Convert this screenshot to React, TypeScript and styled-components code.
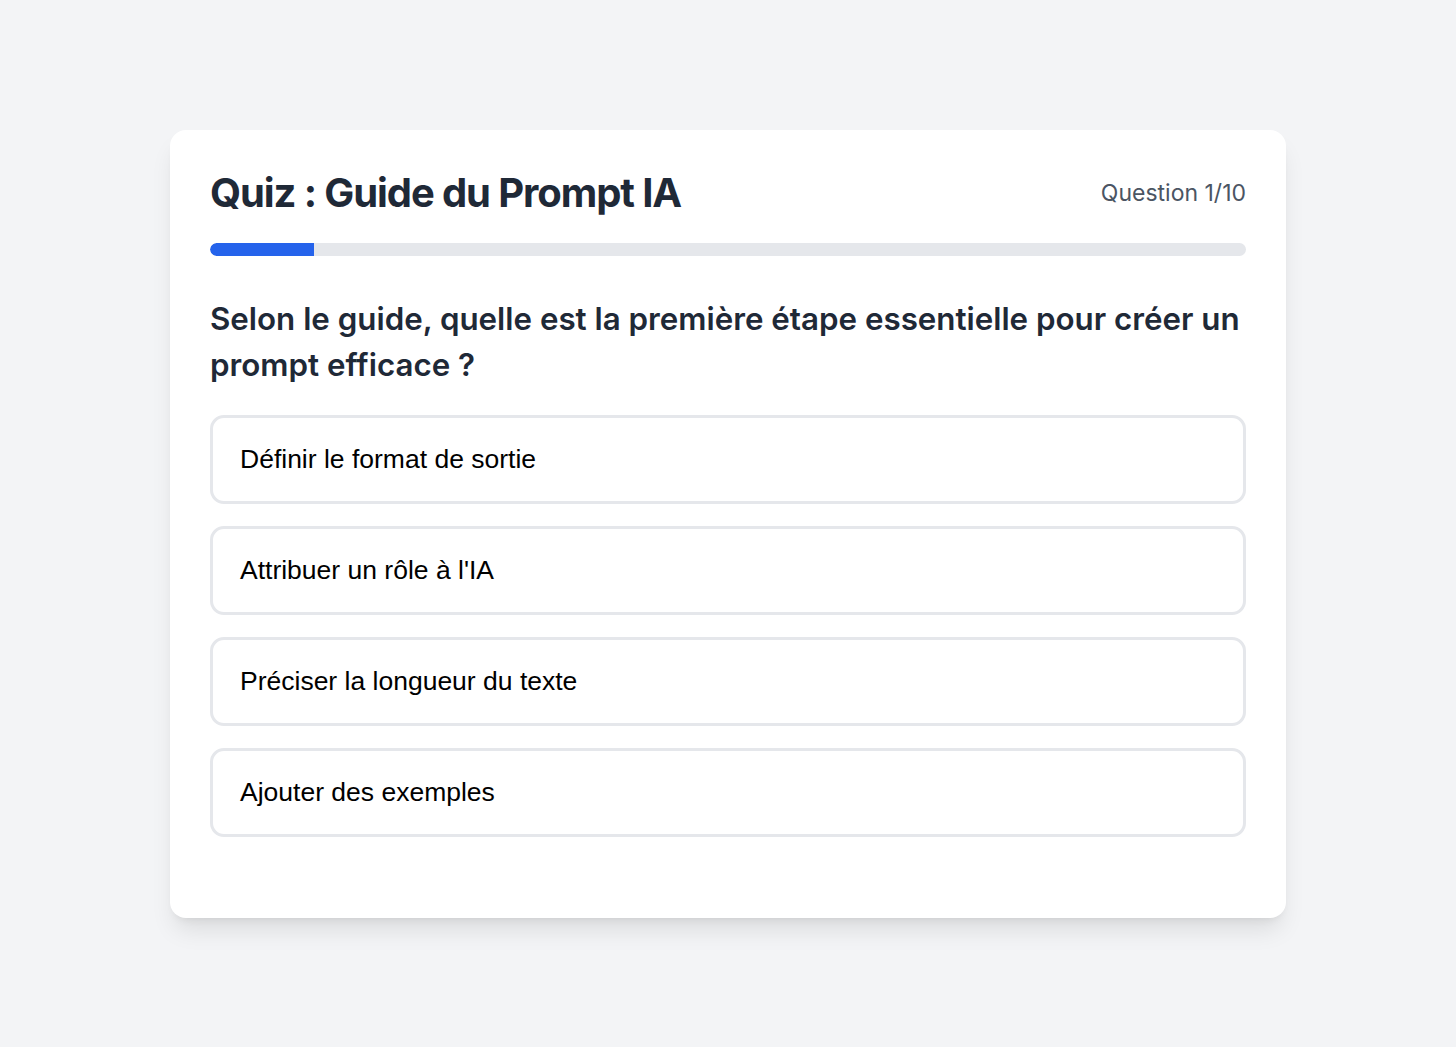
import React from "react";
import styled, { createGlobalStyle } from "styled-components";

const GlobalStyle = createGlobalStyle`
  html, body { margin: 0; padding: 0; }
  body {
    background: #f3f4f6;
    font-family: Inter, "Noto Sans", sans-serif;
  }
  * { box-sizing: border-box; }
`;

const Page = styled.div`
  min-height: 100vh;
  display: flex;
  align-items: center;
  justify-content: center;
`;

const Card = styled.div`
  width: 1116px;
  background: #ffffff;
  border-radius: 16px;
  padding: 40px 40px 81px;
  box-shadow: 0 16px 25px -5px rgba(0, 0, 0, 0.1), 0 6px 10px -6px rgba(0, 0, 0, 0.1);
`;

const Header = styled.div`
  display: flex;
  align-items: center;
  justify-content: space-between;
  height: 45px;
  margin-bottom: 28px;
`;

const Title = styled.h1`
  margin: 0;
  font-family: Inter, sans-serif;
  font-size: 40px;
  font-weight: 700;
  line-height: 45px;
  color: #1f2937;
  letter-spacing: -1.1px;
`;

const Counter = styled.span`
  font-family: Inter, sans-serif;
  font-size: 23px;
  color: #4b5563;
  margin-top: 2px;
`;

const Track = styled.div`
  height: 13px;
  border-radius: 999px;
  background: #e5e7eb;
  overflow: hidden;
  margin-bottom: 40px;
`;

const Fill = styled.div`
  height: 100%;
  background: #2563eb;
  border-radius: 999px 0 0 999px;
`;

const Question = styled.h2`
  margin: 0 0 27px;
  font-family: Inter, sans-serif;
  font-size: 31.3px;
  font-weight: 600;
  line-height: 46px;
  color: #1f2937;
  letter-spacing: 0;
`;

const Options = styled.div`
  display: flex;
  flex-direction: column;
  gap: 22px;
`;

const Option = styled.button`
  display: block;
  width: 100%;
  text-align: left;
  background: #ffffff;
  border: 3px solid #e5e7eb;
  border-radius: 14px;
  padding: 26.5px 27px;
  font-family: "Liberation Sans", Arial, sans-serif;
  font-size: 26.5px;
  line-height: 30px;
  color: #000000;
  cursor: pointer;
`;

const answers = [
  "Définir le format de sortie",
  "Attribuer un rôle à l'IA",
  "Préciser la longueur du texte",
  "Ajouter des exemples",
];

export default function App() {
  const progress = 1 / 10;
  return (
    <>
      <GlobalStyle />
      <Page>
        <Card>
          <Header>
            <Title>Quiz : Guide du Prompt IA</Title>
            <Counter>Question 1/10</Counter>
          </Header>
          <Track>
            <Fill style={{ width: `${progress * 100}%` }} />
          </Track>
          <Question>
            Selon le guide, quelle est la première étape essentielle pour créer un prompt efficace ?
          </Question>
          <Options>
            {answers.map((a) => (
              <Option key={a}>{a}</Option>
            ))}
          </Options>
        </Card>
      </Page>
    </>
  );
}
